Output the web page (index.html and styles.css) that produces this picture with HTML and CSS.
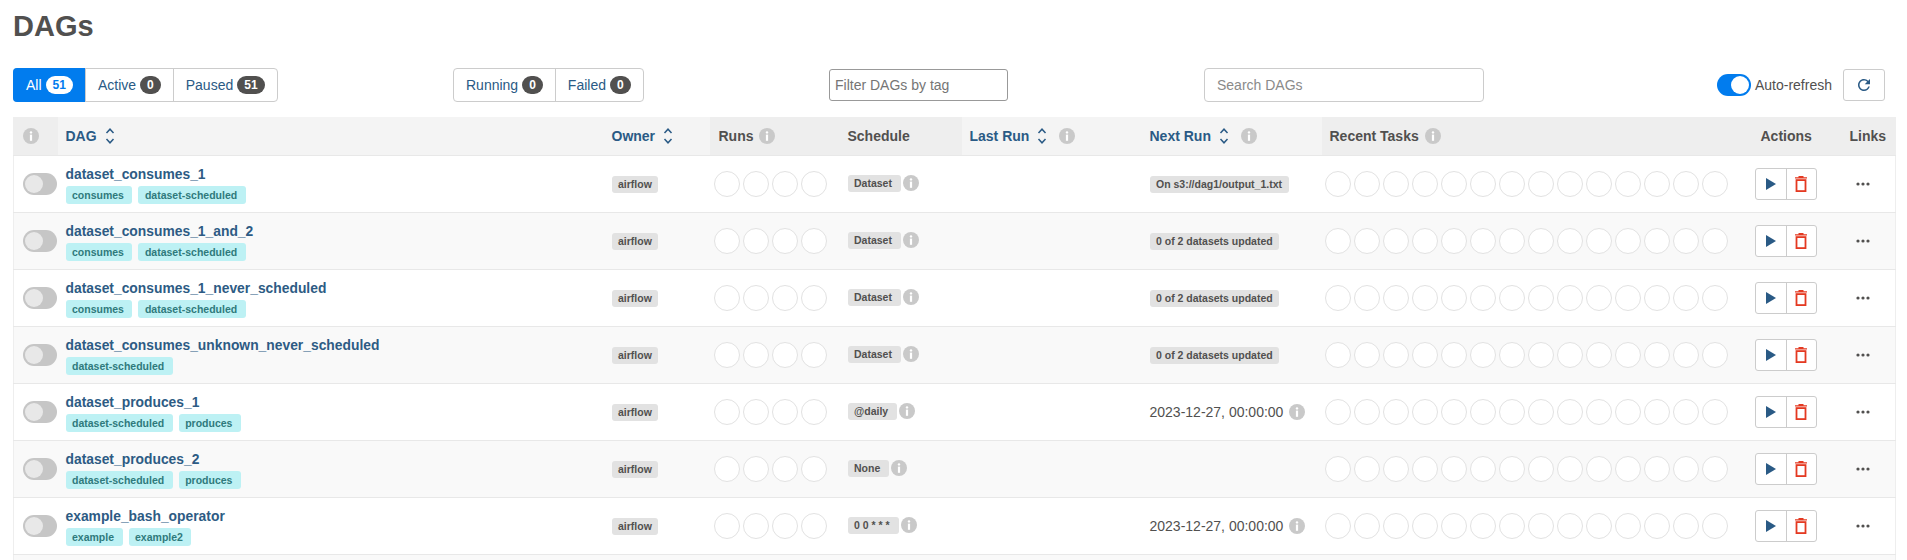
FILE: index.html
```html
<!DOCTYPE html>
<html lang="en">
<head>
    <meta charset="UTF-8">
    <title>DAGs - Airflow</title>
    <link rel="stylesheet" href="styles.css">
</head>
<body>
    <!-- icons used all over the table -->
    <svg class="sprite" width="0" height="0">
        <symbol id="info" viewBox="0 0 16 16">
            <circle cx="8" cy="8" r="8" fill="#c9c9c9"/>
            <circle cx="8" cy="4.4" r="1.2" fill="#fff"/>
            <rect x="6.9" y="6.6" width="2.2" height="6.2" fill="#fff"/>
        </symbol>
        <symbol id="sort" viewBox="0 0 10 18">
            <path d="M1.5 6 5 2.2 8.500 6M1.500 12 5 15.800 8.500 12" fill="none" stroke="#2a5a85" stroke-width="1.500"/>
        </symbol>
        <symbol id="play" viewBox="0 0 10 12">
            <path d="M0 0 10 6 0 12z" fill="#2a5a85"/>
        </symbol>
        <symbol id="trash" viewBox="0 0 12 16">
            <path d="M3.500 0h5v1.200h3.500v1.400H0V1.200h3.500z" fill="#e43921"/>
            <rect x="1.500" y="4.100" width="9" height="11" fill="none" stroke="#e43921" stroke-width="1.800"/>
        </symbol>
        <symbol id="dots" viewBox="0 0 14 4">
            <circle cx="2" cy="2" r="1.600" fill="#51504f"/>
            <circle cx="7" cy="2" r="1.600" fill="#51504f"/>
            <circle cx="12" cy="2" r="1.600" fill="#51504f"/>
        </symbol>
    </svg>

    <h1>DAGs</h1>

    <div class="toolbar">
        <div class="btn-group">
            <a class="seg seg-active">All <span class="pill pill-light">51</span></a>
            <a class="seg">Active <span class="pill">0</span></a>
            <a class="seg">Paused <span class="pill">51</span></a>
        </div>
        <div class="btn-group">
            <a class="seg">Running <span class="pill">0</span></a>
            <a class="seg">Failed <span class="pill">0</span></a>
        </div>
        <div><input class="tag-filter" type="text" placeholder="Filter DAGs by tag"></div>
        <div><input class="dag-search" type="text" placeholder="Search DAGs"></div>
        <div class="refresh-box">
            <span class="switch switch-on"><span class="knob"></span></span>
            <span class="refresh-label">Auto-refresh</span>
            <button class="refresh-btn">
                <svg width="18" height="18" viewBox="0 0 24 24"><path fill="#2a5a85" d="M17.650 6.350A7.958 7.958 0 0 0 12 4c-4.420 0-7.990 3.580-7.990 8s3.570 8 7.990 8c3.730 0 6.840-2.550 7.730-6h-2.080A5.990 5.990 0 0 1 12 18c-3.310 0-6-2.690-6-6s2.690-6 6-6c1.660 0 3.140.690 4.220 1.780L13 11h7V4l-2.350 2.350z"/></svg>
            </button>
        </div>
    </div>

    <table class="dags">
        <colgroup>
            <col class="c-toggle"><col class="c-dag"><col class="c-owner"><col class="c-runs"><col class="c-schedule">
            <col class="c-last"><col class="c-next"><col class="c-tasks"><col class="c-actions"><col class="c-links">
        </colgroup>
        <thead>
            <tr>
                <th class="dark th-toggle"><svg class="i"><use href="#info"/></svg></th>
                <th class="link">DAG <svg class="s"><use href="#sort"/></svg></th>
                <th class="link">Owner <svg class="s"><use href="#sort"/></svg></th>
                <th class="dark th-runs">Runs <svg class="i"><use href="#info"/></svg></th>
                <th class="dark">Schedule</th>
                <th class="link">Last Run <svg class="s"><use href="#sort"/></svg> <svg class="i"><use href="#info"/></svg></th>
                <th class="link">Next Run <svg class="s"><use href="#sort"/></svg> <svg class="i"><use href="#info"/></svg></th>
                <th class="dark">Recent Tasks <svg class="i"><use href="#info"/></svg></th>
                <th class="dark">Actions</th>
                <th class="dark">Links</th>
            </tr>
        </thead>
        <tbody>
            <tr>
                <td class="td-toggle"><span class="switch"><span class="knob"></span></span></td>
                <td><a class="dag-name">dataset_consumes_1</a><div class="tags"><span class="tag">consumes</span><span class="tag">dataset-scheduled</span></div></td>
                <td><span class="badge">airflow</span></td>
                <td class="td-runs"><span class="dots"><i></i><i></i><i></i><i></i></span></td>
                <td><div class="sched"><span class="badge badge-sched">Dataset</span><svg class="i-sched"><use href="#info"/></svg></div></td>
                <td></td>
                <td><span class="badge">On s3://dag1/output_1.txt</span></td>
                <td class="td-tasks"><span class="dots"><i></i><i></i><i></i><i></i><i></i><i></i><i></i><i></i><i></i><i></i><i></i><i></i><i></i><i></i></span></td>
                <td class="td-actions"><span class="act"><span class="act-btn"><svg class="play"><use href="#play"/></svg></span><span class="act-btn"><svg class="trash"><use href="#trash"/></svg></span></span></td>
                <td class="td-links"><svg class="more"><use href="#dots"/></svg></td>
            </tr>
            <tr>
                <td class="td-toggle"><span class="switch"><span class="knob"></span></span></td>
                <td><a class="dag-name">dataset_consumes_1_and_2</a><div class="tags"><span class="tag">consumes</span><span class="tag">dataset-scheduled</span></div></td>
                <td><span class="badge">airflow</span></td>
                <td class="td-runs"><span class="dots"><i></i><i></i><i></i><i></i></span></td>
                <td><div class="sched"><span class="badge badge-sched">Dataset</span><svg class="i-sched"><use href="#info"/></svg></div></td>
                <td></td>
                <td><span class="badge">0 of 2 datasets updated</span></td>
                <td class="td-tasks"><span class="dots"><i></i><i></i><i></i><i></i><i></i><i></i><i></i><i></i><i></i><i></i><i></i><i></i><i></i><i></i></span></td>
                <td class="td-actions"><span class="act"><span class="act-btn"><svg class="play"><use href="#play"/></svg></span><span class="act-btn"><svg class="trash"><use href="#trash"/></svg></span></span></td>
                <td class="td-links"><svg class="more"><use href="#dots"/></svg></td>
            </tr>
            <tr>
                <td class="td-toggle"><span class="switch"><span class="knob"></span></span></td>
                <td><a class="dag-name">dataset_consumes_1_never_scheduled</a><div class="tags"><span class="tag">consumes</span><span class="tag">dataset-scheduled</span></div></td>
                <td><span class="badge">airflow</span></td>
                <td class="td-runs"><span class="dots"><i></i><i></i><i></i><i></i></span></td>
                <td><div class="sched"><span class="badge badge-sched">Dataset</span><svg class="i-sched"><use href="#info"/></svg></div></td>
                <td></td>
                <td><span class="badge">0 of 2 datasets updated</span></td>
                <td class="td-tasks"><span class="dots"><i></i><i></i><i></i><i></i><i></i><i></i><i></i><i></i><i></i><i></i><i></i><i></i><i></i><i></i></span></td>
                <td class="td-actions"><span class="act"><span class="act-btn"><svg class="play"><use href="#play"/></svg></span><span class="act-btn"><svg class="trash"><use href="#trash"/></svg></span></span></td>
                <td class="td-links"><svg class="more"><use href="#dots"/></svg></td>
            </tr>
            <tr>
                <td class="td-toggle"><span class="switch"><span class="knob"></span></span></td>
                <td><a class="dag-name">dataset_consumes_unknown_never_scheduled</a><div class="tags"><span class="tag">dataset-scheduled</span></div></td>
                <td><span class="badge">airflow</span></td>
                <td class="td-runs"><span class="dots"><i></i><i></i><i></i><i></i></span></td>
                <td><div class="sched"><span class="badge badge-sched">Dataset</span><svg class="i-sched"><use href="#info"/></svg></div></td>
                <td></td>
                <td><span class="badge">0 of 2 datasets updated</span></td>
                <td class="td-tasks"><span class="dots"><i></i><i></i><i></i><i></i><i></i><i></i><i></i><i></i><i></i><i></i><i></i><i></i><i></i><i></i></span></td>
                <td class="td-actions"><span class="act"><span class="act-btn"><svg class="play"><use href="#play"/></svg></span><span class="act-btn"><svg class="trash"><use href="#trash"/></svg></span></span></td>
                <td class="td-links"><svg class="more"><use href="#dots"/></svg></td>
            </tr>
            <tr>
                <td class="td-toggle"><span class="switch"><span class="knob"></span></span></td>
                <td><a class="dag-name">dataset_produces_1</a><div class="tags"><span class="tag">dataset-scheduled</span><span class="tag">produces</span></div></td>
                <td><span class="badge">airflow</span></td>
                <td class="td-runs"><span class="dots"><i></i><i></i><i></i><i></i></span></td>
                <td><div class="sched"><span class="badge badge-sched">@daily</span><svg class="i-sched"><use href="#info"/></svg></div></td>
                <td></td>
                <td>2023-12-27, 00:00:00 <svg class="i"><use href="#info"/></svg></td>
                <td class="td-tasks"><span class="dots"><i></i><i></i><i></i><i></i><i></i><i></i><i></i><i></i><i></i><i></i><i></i><i></i><i></i><i></i></span></td>
                <td class="td-actions"><span class="act"><span class="act-btn"><svg class="play"><use href="#play"/></svg></span><span class="act-btn"><svg class="trash"><use href="#trash"/></svg></span></span></td>
                <td class="td-links"><svg class="more"><use href="#dots"/></svg></td>
            </tr>
            <tr>
                <td class="td-toggle"><span class="switch"><span class="knob"></span></span></td>
                <td><a class="dag-name">dataset_produces_2</a><div class="tags"><span class="tag">dataset-scheduled</span><span class="tag">produces</span></div></td>
                <td><span class="badge">airflow</span></td>
                <td class="td-runs"><span class="dots"><i></i><i></i><i></i><i></i></span></td>
                <td><div class="sched"><span class="badge badge-sched">None</span><svg class="i-sched"><use href="#info"/></svg></div></td>
                <td></td>
                <td></td>
                <td class="td-tasks"><span class="dots"><i></i><i></i><i></i><i></i><i></i><i></i><i></i><i></i><i></i><i></i><i></i><i></i><i></i><i></i></span></td>
                <td class="td-actions"><span class="act"><span class="act-btn"><svg class="play"><use href="#play"/></svg></span><span class="act-btn"><svg class="trash"><use href="#trash"/></svg></span></span></td>
                <td class="td-links"><svg class="more"><use href="#dots"/></svg></td>
            </tr>
            <tr>
                <td class="td-toggle"><span class="switch"><span class="knob"></span></span></td>
                <td><a class="dag-name">example_bash_operator</a><div class="tags"><span class="tag">example</span><span class="tag">example2</span></div></td>
                <td><span class="badge">airflow</span></td>
                <td class="td-runs"><span class="dots"><i></i><i></i><i></i><i></i></span></td>
                <td><div class="sched"><span class="badge badge-sched">0 0 * * *</span><svg class="i-sched"><use href="#info"/></svg></div></td>
                <td></td>
                <td>2023-12-27, 00:00:00 <svg class="i"><use href="#info"/></svg></td>
                <td class="td-tasks"><span class="dots"><i></i><i></i><i></i><i></i><i></i><i></i><i></i><i></i><i></i><i></i><i></i><i></i><i></i><i></i></span></td>
                <td class="td-actions"><span class="act"><span class="act-btn"><svg class="play"><use href="#play"/></svg></span><span class="act-btn"><svg class="trash"><use href="#trash"/></svg></span></span></td>
                <td class="td-links"><svg class="more"><use href="#dots"/></svg></td>
            </tr>
            <tr class="row-cut">
                <td colspan="10"></td>
            </tr>
        </tbody>
    </table>
</body>
</html>
```

FILE: styles.css
```css
* {
    box-sizing: border-box;
}
html, body {
    height: 560px;
    overflow: hidden;
}
body {
    margin: 0;
    padding: 0 12px 0 13px;
    font-family: "Liberation Sans", Arial, sans-serif;
    font-size: 14px;
    color: #51504f;
    background: #fff;
}
.sprite {
    display: none;
}
h1 {
    margin: 8px 0 0;
    font-size: 29px;
    line-height: 36px;
    font-weight: bold;
    color: #51504f;
}

/* toolbar */
.toolbar {
    display: grid;
    grid-template-columns: 440px 376px 375px 513px 1fr;
    align-items: center;
    height: 34px;
    margin-top: 24px;
    padding-right: 10px;
}
.btn-group {
    display: inline-flex;
    height: 34px;
    width: max-content;
    border: 1px solid #ccc;
    border-radius: 4px;
}
.seg {
    display: flex;
    align-items: center;
    gap: 4px;
    padding: 0 12px;
    color: #2a5a85;
    border-left: 1px solid #ccc;
}
.seg:first-child {
    border-left: 0;
}
.seg-active {
    margin: -1px 0 -1px -1px;
    padding: 0 12px 0 13px;
    color: #fff;
    background: #017cee;
    border-radius: 4px 0 0 4px;
}
.pill {
    height: 18px;
    padding: 0 7px;
    border-radius: 9px;
    font-size: 12px;
    font-weight: bold;
    line-height: 18px;
    color: #fff;
    background: #51504f;
}
.pill-light {
    color: #017cee;
    background: #fff;
}
.tag-filter, .dag-search {
    display: block;
    font-family: inherit;
    font-size: 14px;
    background: #fff;
}
.tag-filter {
    width: 179px;
    height: 32px;
    padding: 0 5px;
    border: 1px solid #999;
    border-radius: 3px;
}
.dag-search {
    width: 280px;
    height: 34px;
    padding: 0 12px;
    border: 1px solid #ccc;
    border-radius: 4px;
}
.tag-filter::placeholder {
    color: #757575;
}
.dag-search::placeholder {
    color: #8a8a8a;
}
.refresh-box {
    display: flex;
    align-items: center;
    justify-content: flex-end;
    min-width: 0;
}
.refresh-box .switch {
    flex: none;
}
.refresh-label {
    flex: none;
    margin: 0 11px 0 4px;
    white-space: nowrap;
}
.refresh-btn {
    flex: none;
    display: flex;
    align-items: center;
    justify-content: center;
    width: 42px;
    height: 32px;
    padding: 0;
    background: #fff;
    border: 1px solid #ccc;
    border-radius: 3px;
}

/* switches */
.switch {
    display: inline-block;
    width: 34px;
    height: 22px;
    padding: 2px;
    border-radius: 11px;
    background: #c6c6c6;
    vertical-align: middle;
}
.knob {
    display: block;
    width: 18px;
    height: 18px;
    border-radius: 50%;
    background: #e8e8e8;
}
.switch-on {
    background: #017cee;
}
.switch-on .knob {
    margin-left: 12px;
    background: #fff;
}

/* table */
.dags {
    width: 1882px;
    margin-top: 15px;
    table-layout: fixed;
    border-collapse: collapse;
    border-left: 1px solid #eee;
    border-right: 1px solid #eee;
}
.c-toggle { width: 44px; }
.c-dag { width: 547px; }
.c-owner { width: 105px; }
.c-runs { width: 131px; }
.c-schedule { width: 121px; }
.c-last { width: 180px; }
.c-next { width: 180px; }
.c-tasks { width: 432px; }
.c-actions { width: 89px; }
.c-links { width: 53px; }
th {
    height: 38px;
    padding: 0 7px;
    text-align: left;
    font-weight: bold;
    white-space: nowrap;
    background: #f4f4f4;
    border-bottom: 1px solid #e8e8e8;
}
th.dark {
    background: #eee;
}
th.link {
    color: #2a5a85;
}
th.th-runs {
    padding-left: 9px;
}
th.th-toggle {
    padding-left: 9px;
}
th.th-toggle .i {
    margin-left: 0;
}
td {
    height: 57px;
    padding: 0 7px;
    white-space: nowrap;
    border-bottom: 1px solid #e8e8e8;
}
th:nth-child(2), th:nth-child(6), th:nth-child(7), th:nth-child(8),
td:nth-child(2), td:nth-child(7) {
    padding-left: 8px;
}
tbody tr:nth-child(even) td {
    background: #f9f9f9;
}
tbody tr.row-cut td {
    height: 6px;
    border-bottom: 0;
}
.td-toggle {
    padding: 0 0 0 9px;
}
.td-runs {
    padding-left: 4px;
}
.td-tasks {
    padding-left: 3px;
}
.td-actions {
    padding-left: 1px;
}
.td-links {
    padding-left: 13px;
}
.i {
    width: 16px;
    height: 16px;
    margin-left: 2px;
    vertical-align: -3px;
}
.s {
    width: 10px;
    height: 18px;
    margin: 0 6px 0 4px;
    vertical-align: -4px;
}
.dag-name {
    display: block;
    padding-top: 1px;
    font-size: 13.850px;
    font-weight: bold;
    line-height: 20px;
    color: #2d5b84;
}
.tags {
    display: flex;
    gap: 6px;
    margin-top: 2px;
}
.tag {
    height: 18px;
    padding: 0 8.500px 0 6.500px;
    border-radius: 3px;
    font-size: 10.500px;
    font-weight: bold;
    line-height: 18px;
    color: #2f7a7c;
    background: #bdf1f4;
}
.badge {
    display: inline-block;
    height: 17px;
    padding: 0 6.500px;
    border-radius: 3px;
    font-size: 10.500px;
    font-weight: bold;
    line-height: 17px;
    color: #51504f;
    background: #e2e2e2;
}
.sched {
    display: flex;
    align-items: flex-start;
    gap: 2px;
}
.badge-sched {
    padding-right: 9px;
}
.i-sched {
    width: 16px;
    height: 16px;
}
.dots {
    display: flex;
    gap: 3px;
}
.dots i {
    width: 26px;
    height: 26px;
    border: 1.500px solid #e2e2e2;
    border-radius: 50%;
    background: #fff;
}
.act {
    display: inline-flex;
    height: 32px;
    vertical-align: middle;
    border: 1px solid #ccc;
    border-radius: 3px;
    background: #fff;
}
.act-btn {
    display: flex;
    align-items: center;
    justify-content: center;
    width: 30px;
    border-left: 1px solid #ccc;
}
.act-btn:first-child {
    border-left: 0;
}
.play {
    width: 10px;
    height: 12px;
}
.trash {
    width: 12px;
    height: 16px;
}
.more {
    display: block;
    width: 14px;
    height: 4px;
}
```
